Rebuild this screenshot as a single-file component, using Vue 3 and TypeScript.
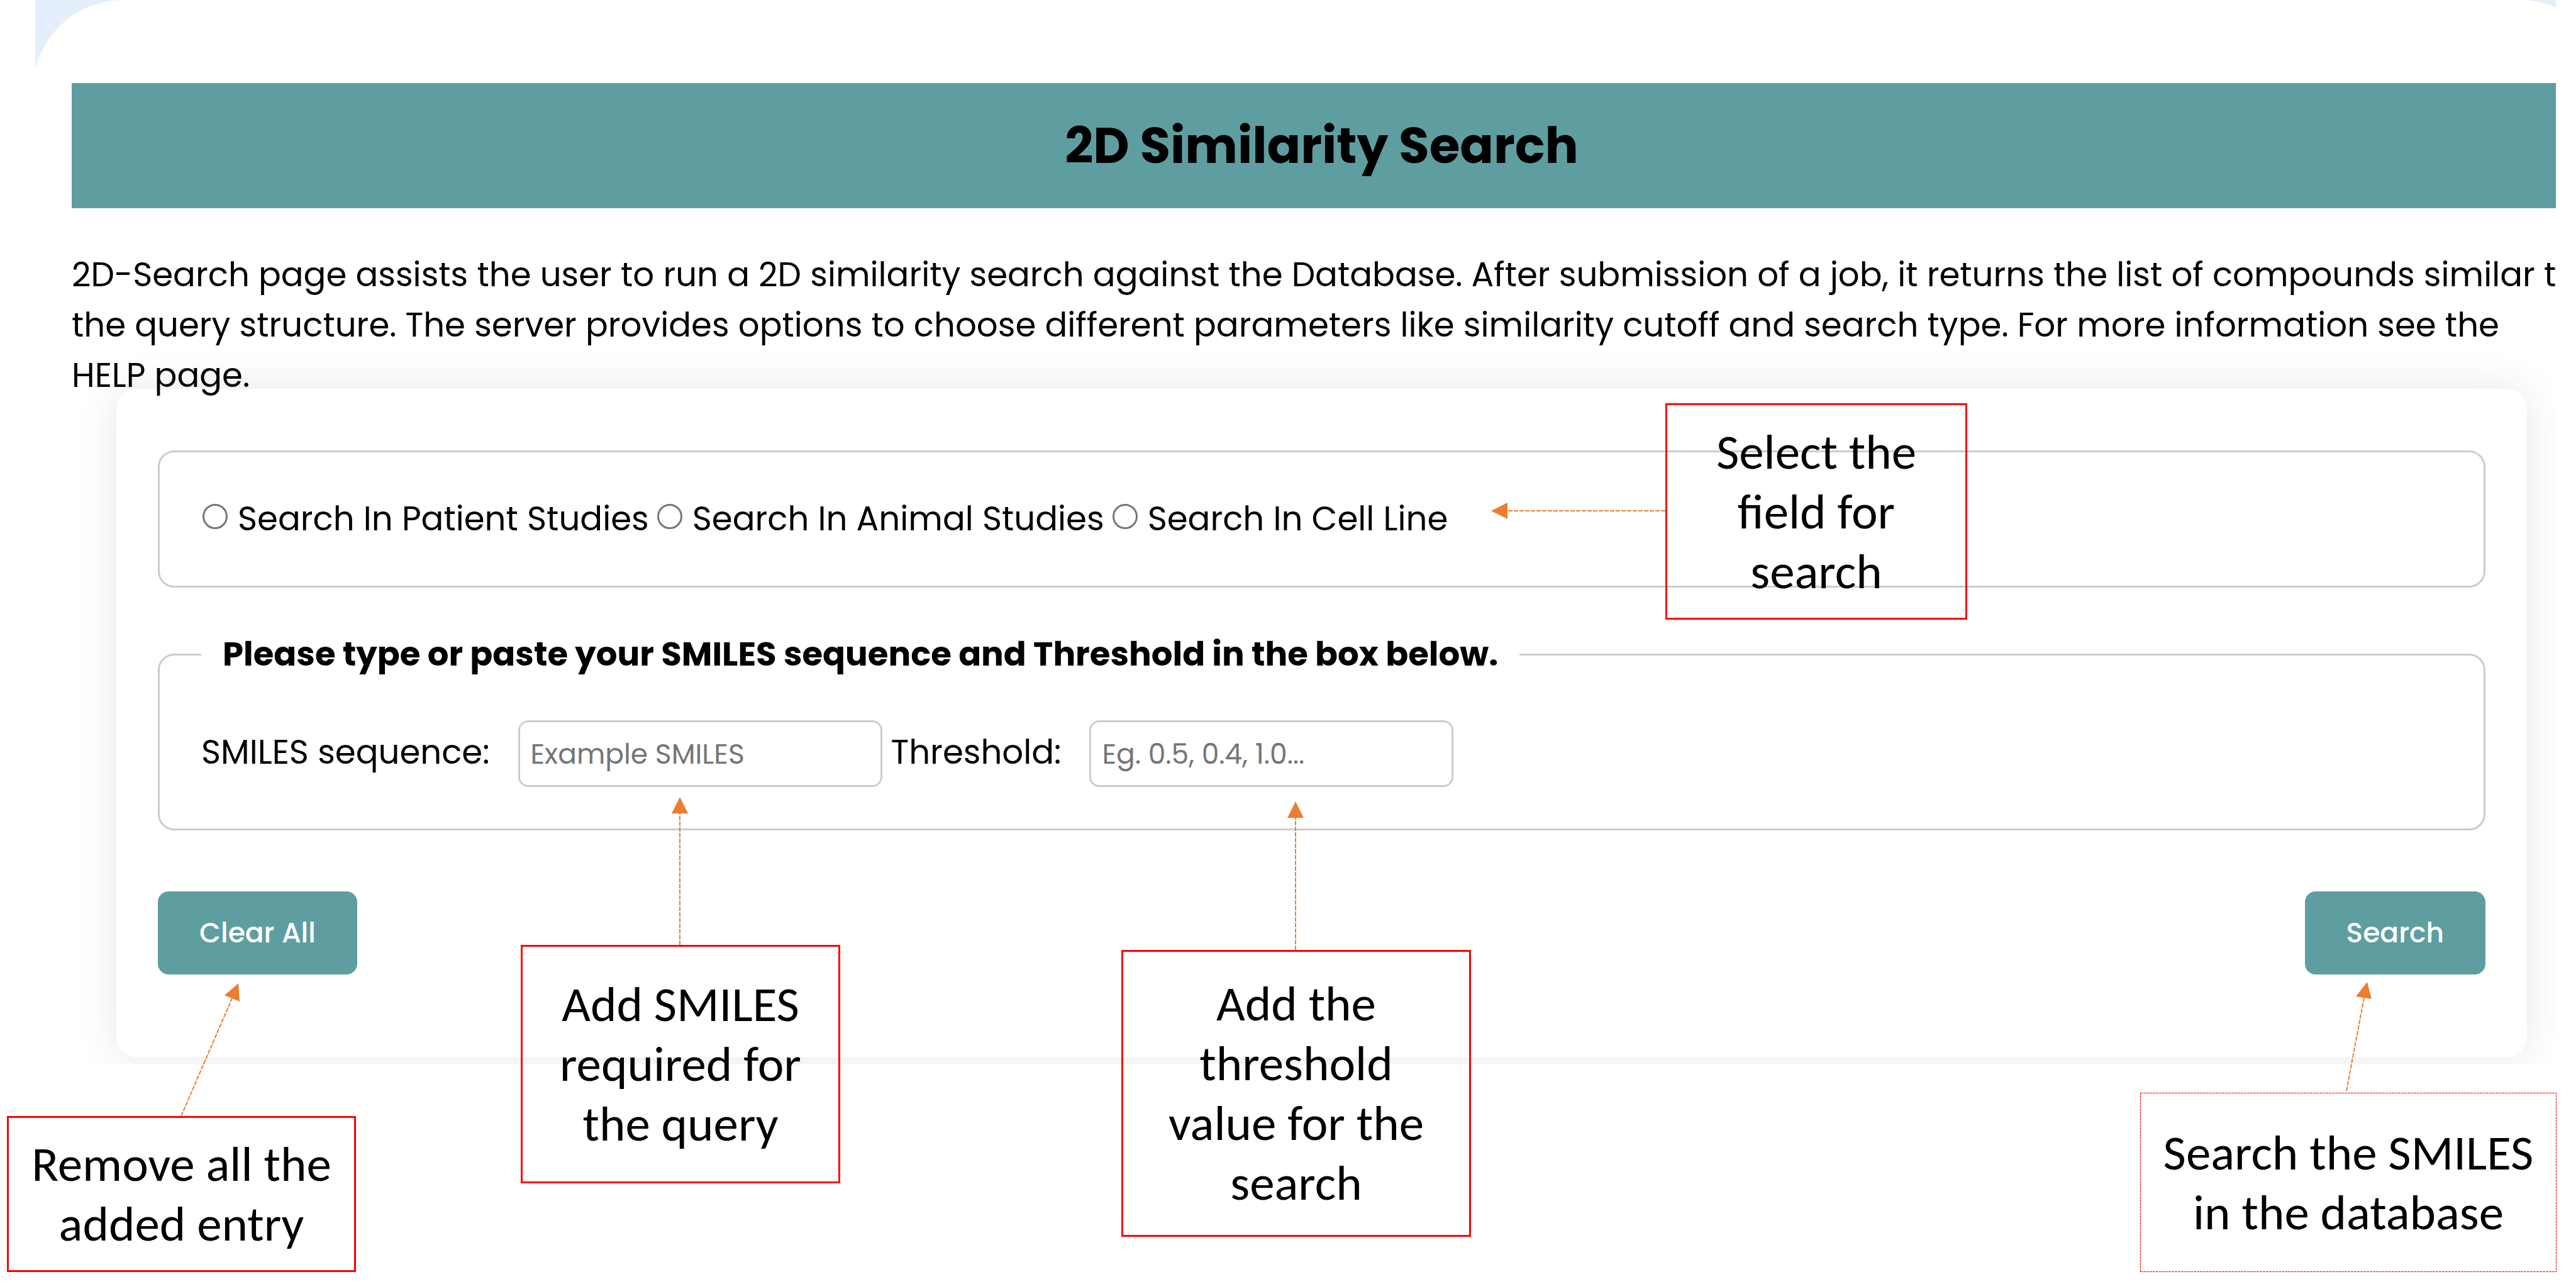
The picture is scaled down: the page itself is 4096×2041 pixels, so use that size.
<script setup lang="ts">
import { ref } from 'vue'

interface Field {
  value: string
  label: string
}

interface Callout {
  name: string
  lines: string[]
  dashed?: boolean
  // Arrow geometry, measured from the top left corner of the note.
  line: { x1: number; y1: number; x2: number; y2: number }
  head: string
}

const fields: Field[] = [
  { value: 'patient', label: 'Search In Patient Studies' },
  { value: 'animal', label: 'Search In Animal Studies' },
  { value: 'cell', label: 'Search In Cell Line' },
]

const callouts: Callout[] = [
  {
    name: 'field',
    lines: ['Select the', 'field for', 'search'],
    line: { x1: 0, y1: 171, x2: -251, y2: 171 },
    head: '-277,171 -251,158 -251,184',
  },
  {
    name: 'clear',
    lines: ['Remove all the', 'added entry'],
    line: { x1: 277, y1: 0, x2: 358, y2: -187 },
    head: '368,-211 346,-192 370,-182',
  },
  {
    name: 'smiles',
    lines: ['Add SMILES', 'required for', 'the query'],
    line: { x1: 253, y1: 0, x2: 253, y2: -209 },
    head: '253,-235 240,-209 266,-209',
  },
  {
    name: 'threshold',
    lines: ['Add the', 'threshold', 'value for the', 'search'],
    line: { x1: 277, y1: 0, x2: 277, y2: -210 },
    head: '277,-236 264,-210 290,-210',
  },
  {
    name: 'submit',
    lines: ['Search the SMILES', 'in the database'],
    dashed: true,
    line: { x1: 331, y1: 0, x2: 359, y2: -148 },
    head: '364,-173 346,-150 371,-146',
  },
]

const field = ref('')
const smiles = ref('')
const threshold = ref('')

function clearAll(): void {
  field.value = ''
  smiles.value = ''
  threshold.value = ''
}
</script>

<template>
  <div class="page">
    <main class="shell">
      <div class="sheet">
        <h1 class="title">2D Similarity Search</h1>
        <p class="intro">
          2D-Search page assists the user to run a 2D similarity search against the Database. After
          submission of a job, it returns the list of compounds similar to the query structure. The
          server provides options to choose different parameters like similarity cutoff and search
          type. For more information see the HELP page.
        </p>

        <form class="panel" @submit.prevent>
          <fieldset class="group choices" aria-label="Search field">
            <label v-for="f in fields" :key="f.value" class="choice">
              <input v-model="field" class="radio" type="radio" name="field" :value="f.value" />
              <span>{{ f.label }}</span>
            </label>
          </fieldset>

          <fieldset class="group query">
            <legend class="legend">
              Please type or paste your SMILES sequence and Threshold in the box below.
            </legend>
            <div class="inputs">
              <label class="caption" for="smiles">SMILES sequence:</label>
              <input id="smiles" v-model="smiles" class="box" type="text" placeholder="Example SMILES" />
              <label class="caption" for="threshold">Threshold:</label>
              <input
                id="threshold"
                v-model="threshold"
                class="box"
                type="text"
                placeholder="Eg. 0.5, 0.4, 1.0..."
              />
            </div>
          </fieldset>

          <div class="actions">
            <button class="button" type="button" @click="clearAll">Clear All</button>
            <button class="button" type="submit">Search</button>
          </div>
        </form>
      </div>
    </main>

    <aside v-for="c in callouts" :key="c.name" class="callout" :class="`callout-${c.name}`">
      <svg v-if="c.dashed" class="frame" aria-hidden="true">
        <rect width="100%" height="100%" />
      </svg>
      <svg class="arrow" width="1" height="1" aria-hidden="true">
        <line v-bind="c.line" />
        <polygon :points="c.head" />
      </svg>
      <span v-for="l in c.lines" :key="l">{{ l }}</span>
    </aside>
  </div>
</template>

<style>
body {
  margin: 0;
  background: #fff;
}
</style>

<style scoped>
.page {
  position: relative;
  box-sizing: border-box;
  min-height: 100vh;
  padding: 0 32px 0 56px;
  overflow: hidden;
  color: #000;
  font-family: Poppins, Inter, sans-serif;
  font-size: 53px;
  line-height: 80px;
}

.shell {
  overflow: hidden;
  background: #e4effb;
}

/* The sheet is wider than the shell, which cuts its sides off. */
.sheet {
  box-sizing: border-box;
  margin: 0 -87px 0 -4px;
  padding: 132px 62px 11px;
  border-radius: 144px 144px 0 0;
  background: #fff;
}

.title {
  margin: 0;
  padding: 40px 0;
  background: #5f9ea0;
  font-size: 79px;
  font-weight: 700;
  line-height: 119px;
  text-align: center;
}

.intro {
  margin: 66px -16px 0 0;
}

.panel {
  margin: -19px 71px 0;
  padding: 98px 66px 132px;
  border-radius: 33px;
  box-shadow: 0 0 66px rgba(0, 0, 0, 0.1);
}

.group {
  min-width: 0;
  margin: 0;
  border: 3px solid #ccc;
  border-radius: 26px;
}

.choices {
  display: flex;
  align-items: center;
  gap: 13px;
  padding: 66px 68px;
}

.choice {
  display: flex;
  align-items: center;
  gap: 16px;
}

.radio {
  box-sizing: border-box;
  width: 40px;
  height: 40px;
  margin: 0 0 8px;
  border: 3px solid #767676;
  border-radius: 50%;
  appearance: none;
  background: #fff;
}

.radio:checked {
  border-width: 12px;
  border-color: #5f9ea0;
}

.query {
  margin-top: 66px;
  padding: 65px 66px 66px;
}

.legend {
  padding: 0 34px;
  font-weight: 700;
}

.inputs {
  display: flex;
  align-items: baseline;
  gap: 14px;
}

.caption {
  margin-right: 31px;
}

.box {
  box-sizing: border-box;
  width: 579px;
  height: 106px;
  padding: 0 17px;
  border: 3px solid #ccc;
  border-radius: 16px;
  background: #fff;
  color: #000;
  font: inherit;
  font-size: 44px;
}

.box::placeholder {
  color: #757575;
  opacity: 1;
}

.actions {
  display: flex;
  justify-content: space-between;
  margin-top: 97px;
}

.button {
  padding: 26px 66px;
  border: 0;
  border-radius: 17px;
  background: #5f9ea0;
  color: #fff;
  font: inherit;
  font-size: 44px;
  font-weight: 500;
  cursor: pointer;
}

.callout {
  position: absolute;
  display: flex;
  flex-direction: column;
  align-items: center;
  justify-content: center;
  box-sizing: border-box;
  border: 3px solid #f00;
  font-family: Calibri, Carlito, Lato, sans-serif;
  font-size: 79px;
  line-height: 95px;
  white-space: nowrap;
}

.arrow {
  position: absolute;
  top: -3px;
  left: -3px;
  overflow: visible;
}

.arrow line {
  stroke: #ed7d31;
  stroke-width: 2px;
  stroke-dasharray: 7 2;
}

.arrow polygon {
  fill: #ed7d31;
}

.frame {
  position: absolute;
  inset: 0;
  width: 100%;
  height: 100%;
}

.frame rect {
  fill: none;
  stroke: #f00;
  stroke-width: 2px;
  stroke-dasharray: 4 1;
}

.callout-field {
  top: 641px;
  left: 2648px;
  width: 480px;
  height: 344px;
}

.callout-clear {
  top: 1774px;
  left: 11px;
  width: 555px;
  height: 248px;
}

.callout-smiles {
  top: 1502px;
  left: 828px;
  width: 508px;
  height: 379px;
}

.callout-threshold {
  top: 1510px;
  left: 1783px;
  width: 556px;
  height: 456px;
}

.callout-submit {
  top: 1737px;
  right: 31px;
  width: 662px;
  height: 285px;
  border: 0;
}
</style>
